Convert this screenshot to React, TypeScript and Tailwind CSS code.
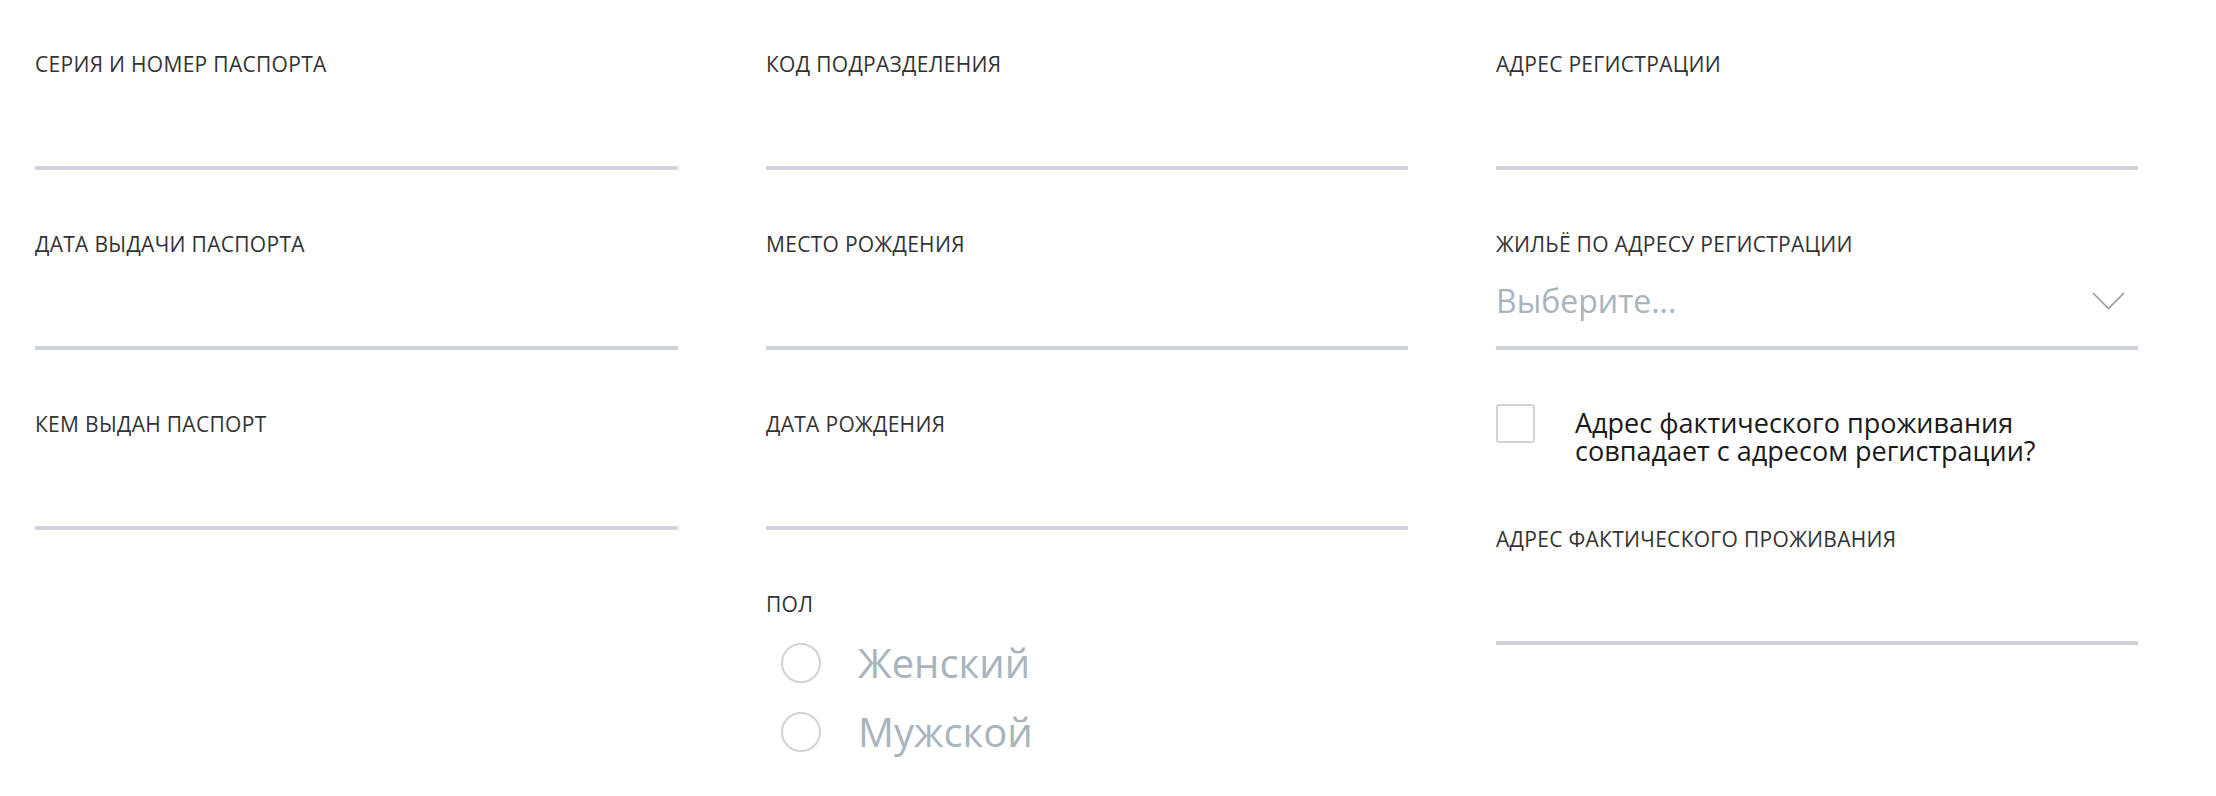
import React from "react";

const font = { fontFamily: '"Open Sans", "Noto Sans", sans-serif' };

function Label({ children }: { children: React.ReactNode }) {
  return (
    <div className="h-[28px] text-[21px] leading-[28px] tracking-[0.3px] text-[#333333] whitespace-nowrap">
      {children}
    </div>
  );
}

function Field({ label, last }: { label: string; last?: boolean }) {
  return (
    <div className={last ? "" : "mb-[60px]"}>
      <Label>{label}</Label>
      <div className="h-[92px] border-b-4 border-[#d0d2da]" />
    </div>
  );
}

function SelectField({ label }: { label: string }) {
  return (
    <div className="mb-[54px]">
      <Label>{label}</Label>
      <div className="h-[92px] border-b-4 border-[#d0d2da] flex items-center justify-between pr-[13px] pb-[2px]">
        <span className="text-[32px] leading-[40px] text-[#a9b4bd]">Выберите...</span>
        <svg width="33" height="18" viewBox="0 0 33 18" fill="none">
          <path d="M1 1 L16.5 16.5 L32 1" stroke="#9a9a9a" strokeWidth="1.6" />
        </svg>
      </div>
    </div>
  );
}

function Radio({ label }: { label: string }) {
  return (
    <div className="flex items-center h-[40px] pl-[15px]">
      <div className="w-[40px] h-[40px] shrink-0 rounded-full border-2 border-[#d0d2da]" />
      <span className="ml-[37px] text-[40px] leading-[40px] text-[#a9b4bd]">{label}</span>
    </div>
  );
}

export default function App() {
  return (
    <div className="w-[2216px] h-[796px] bg-white" style={font}>
      <div className="grid grid-cols-[643px_642px_642px] gap-x-[88px] pl-[35px] pt-[50px]">
        <div>
          <Field label="СЕРИЯ И НОМЕР ПАСПОРТА" />
          <Field label="ДАТА ВЫДАЧИ ПАСПОРТА" />
          <Field label="КЕМ ВЫДАН ПАСПОРТ" />
        </div>
        <div>
          <Field label="КОД ПОДРАЗДЕЛЕНИЯ" />
          <Field label="МЕСТО РОЖДЕНИЯ" />
          <Field label="ДАТА РОЖДЕНИЯ" />
          <Label>ПОЛ</Label>
          <div className="mt-[25px] flex flex-col gap-[29px]">
            <Radio label="Женский" />
            <Radio label="Мужской" />
          </div>
        </div>
        <div>
          <Field label="АДРЕС РЕГИСТРАЦИИ" />
          <SelectField label="ЖИЛЬЁ ПО АДРЕСУ РЕГИСТРАЦИИ" />
          <div className="flex items-start mb-[60px]">
            <div className="w-[39px] h-[39px] shrink-0 rounded-[3px] border-2 border-[#d0d2da]" />
            <div className="ml-[40px] mt-[5px] text-[27px] leading-[28px] text-[#1a1a1a]">
              <div>Адрес фактического проживания</div>
              <div>совпадает с адресом регистрации?</div>
            </div>
          </div>
          <Field label="АДРЕС ФАКТИЧЕСКОГО ПРОЖИВАНИЯ" last />
        </div>
      </div>
    </div>
  );
}
